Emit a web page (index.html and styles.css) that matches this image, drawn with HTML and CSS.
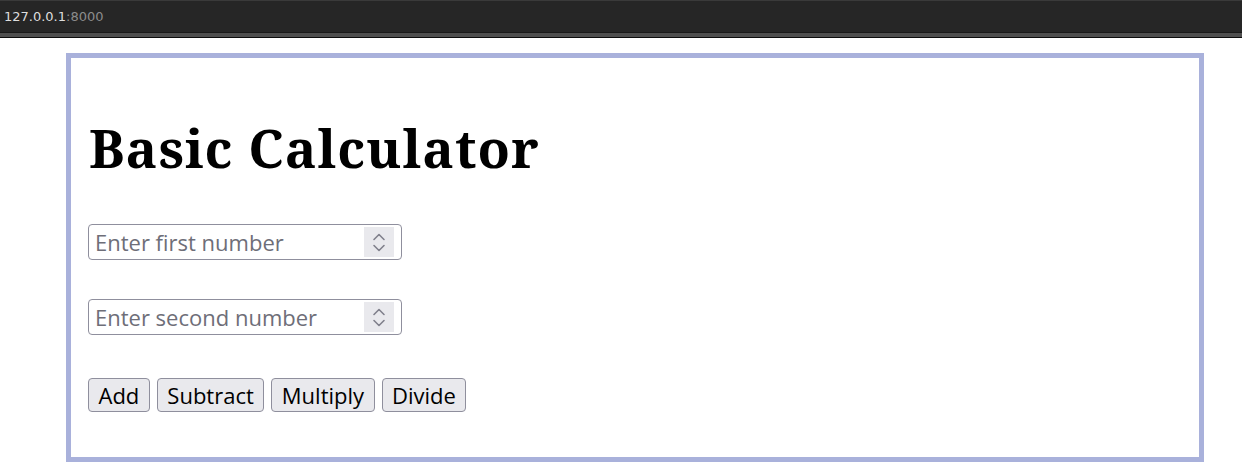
FILE: index.html
```html
<!DOCTYPE html>
<html lang="en">
<head>
<meta charset="utf-8">
<title>Basic Calculator</title>
<link rel="stylesheet" href="styles.css">
</head>
<body>
<div class="urlbar"><span class="host">127.0.0.1</span><span class="port">:8000</span></div>
<main class="page">
  <section class="calc">
    <h1 class="title">Basic Calculator</h1>
    <div class="field">
      <input class="num" type="number" placeholder="Enter first number">
      <span class="spin"><svg width="16" height="30" viewBox="0 0 16 30"><path d="M3 12.5 L8 7.5 L13 12.5" /><path d="M3 18.5 L8 23.5 L13 18.5" /></svg></span>
    </div>
    <div class="field">
      <input class="num" type="number" placeholder="Enter second number">
      <span class="spin"><svg width="16" height="30" viewBox="0 0 16 30"><path d="M3 12.5 L8 7.5 L13 12.5" /><path d="M3 18.5 L8 23.5 L13 18.5" /></svg></span>
    </div>
    <div class="buttons">
      <button class="btn">Add</button>
      <button class="btn">Subtract</button>
      <button class="btn">Multiply</button>
      <button class="btn">Divide</button>
    </div>
  </section>
</main>
</body>
</html>
```
FILE: styles.css
```css
html, body {
  margin: 0;
  padding: 0;
  background: #ffffff;
}

.urlbar {
  height: 32px;
  background: #262626;
  border-top: 1px solid #3a3a3a;
  box-sizing: border-box;
  display: flex;
  align-items: center;
  padding-left: 4px;
  font-family: "DejaVu Sans", sans-serif;
  font-size: 13px;
  box-shadow: 0 1px 0 #1a1a1a, 0 5px 0 #4f4f4f, 0 6px 0 #0d0d0d;
  margin-bottom: 6px;
}
.host { color: #dedede; }
.port { color: #8c8c8c; }

.page {
  padding: 15px 38px 0 66px;
}

.calc {
  width: 1138px;
  height: 409px;
  box-sizing: border-box;
  border: 5px solid #a9b1db;
  padding: 0 17px;
  display: flex;
  flex-direction: column;
  align-items: flex-start;
}

.title {
  margin: 59px 0 0 1px;
  font-family: "Noto Serif", "DejaVu Serif", serif;
  font-weight: 700;
  font-size: 53px;
  letter-spacing: 1px;
  line-height: 62px;
  color: #000;
}

.field {
  margin-top: 45px;
  width: 314px;
  height: 36px;
  box-sizing: border-box;
  border: 1px solid #8f8f9d;
  border-radius: 4px;
  display: flex;
  align-items: stretch;
  padding: 2px 7px 2px 0;
  background: #fff;
}
.field + .field { margin-top: 39px; }

.num {
  flex: 1;
  min-width: 0;
  border: 0;
  outline: none;
  background: transparent;
  padding: 0 0 0 6px;
  font-family: "Open Sans", "Noto Sans", sans-serif;
  font-size: 22px;
  color: #000;
  -moz-appearance: textfield;
}
.num::-webkit-inner-spin-button,
.num::-webkit-outer-spin-button {
  -webkit-appearance: none;
  margin: 0;
}
.num::placeholder { color: #6e6e78; opacity: 1; }

.spin {
  width: 30px;
  background: #e9e9ed;
  display: flex;
  align-items: center;
  justify-content: center;
}
.spin svg { display: block; }
.spin path {
  fill: none;
  stroke: #80808c;
  stroke-width: 1.6;
  stroke-linecap: round;
  stroke-linejoin: round;
}

.buttons {
  margin-top: 43px;
  display: flex;
  gap: 7px;
}

.btn {
  height: 34px;
  box-sizing: border-box;
  padding: 0 9.5px;
  border: 1px solid #8f8f9d;
  border-radius: 4px;
  background: #e9e9ed;
  color: #000;
  font-family: "Open Sans", "Noto Sans", sans-serif;
  font-size: 22px;
  line-height: 32px;
}
```
